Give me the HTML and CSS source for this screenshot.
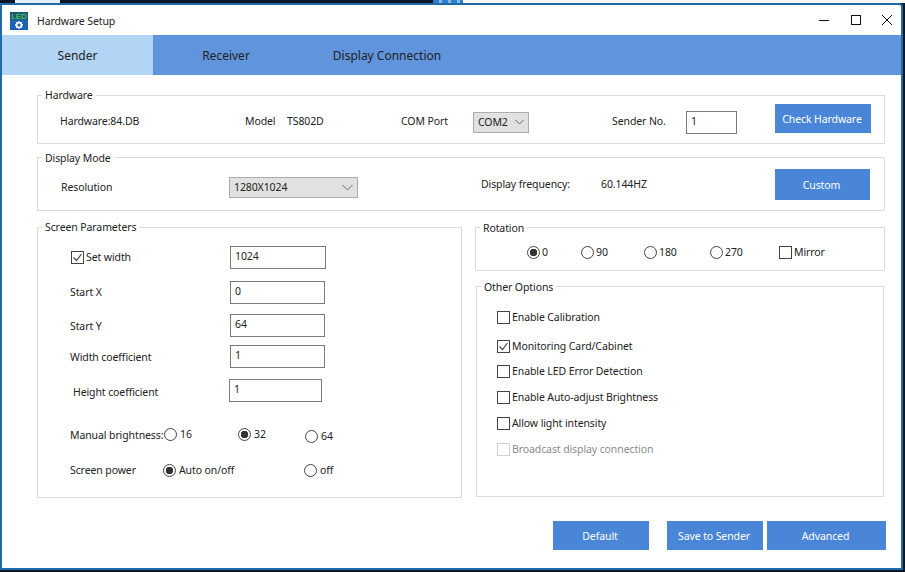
FILE: index.html
```html
<!DOCTYPE html>
<html>
<head>
    <title>Hardware Setup</title>
    <link rel="stylesheet" href="styles.css">
</head>
<body>
    <!-- bits of the desktop behind the window -->
    <div class="desk-left"></div>
    <div class="desk-mid"></div>
    <div class="desk-right"></div>

    <div class="window">
        <div class="titlebar">
            <svg class="app-icon" width="18" height="18" viewBox="0 0 18 18">
                <rect width="18" height="18" fill="#1b62b4"/>
                <rect width="18" height="8" fill="#1d5a7a"/>
                <text x="9" y="7" font-size="8" text-anchor="middle" fill="#5fdc4a" font-family="Liberation Sans, sans-serif">LED</text>
                <circle cx="9" cy="13" r="2.4" fill="none" stroke="#eef2f7" stroke-width="1.8"/>
                <path d="M9 9v1.4M9 15.6V17M5 13h1.4M11.6 13H13M6.2 10.2l1 1M10.8 14.8l1 1M6.2 15.8l1-1M10.8 11.2l1-1" stroke="#eef2f7" stroke-width="1.3"/>
            </svg>
            <span class="title">Hardware Setup</span>
            <div class="win-btns">
                <svg width="13" height="12" viewBox="0 0 13 12"><path d="M1 6.5h10" stroke="#111" stroke-width="1"/></svg>
                <svg width="12" height="12" viewBox="0 0 12 12"><rect x="1.5" y="1.5" width="9" height="9" fill="none" stroke="#111"/></svg>
                <svg width="12" height="12" viewBox="0 0 12 12"><path d="M1 1l10 10M11 1L1 11" stroke="#111" stroke-width="1"/></svg>
            </div>
        </div>

        <div class="tabs">
            <div class="tab tab-active">Sender</div>
            <div class="tab tab-receiver">Receiver</div>
            <div class="tab tab-display">Display Connection</div>
        </div>

        <div class="content">
            <fieldset class="group group-hardware">
                <legend>Hardware</legend>
                <span class="hw-name">Hardware:84.DB</span>
                <span class="hw-model">Model</span>
                <span class="hw-type">TS802D</span>
                <span class="hw-port">COM Port</span>
                <div class="select select-com">COM2<svg width="9" height="6" viewBox="0 0 9 6"><path d="M.5 1l4 4 4-4" fill="none" stroke="#666"/></svg></div>
                <span class="hw-no">Sender No.</span>
                <div class="textbox textbox-no">1</div>
                <button class="btn btn-check">Check Hardware</button>
            </fieldset>

            <fieldset class="group group-mode">
                <legend>Display Mode</legend>
                <span class="mode-label">Resolution</span>
                <div class="select select-res">1280X1024<svg width="11" height="7" viewBox="0 0 11 7"><path d="M.5 1l5 5 5-5" fill="none" stroke="#666"/></svg></div>
                <span class="mode-freq">Display frequency:</span>
                <span class="mode-val">60.144HZ</span>
                <button class="btn btn-custom">Custom</button>
            </fieldset>

            <div class="columns">
                <fieldset class="group group-screen">
                    <legend>Screen Parameters</legend>
                    <div class="screen-body">
                        <div class="row row-width">
                            <label class="check-label"><span class="box"><svg width="13" height="13" viewBox="0 0 13 13"><path d="M2.5 6.5l3 3 5-6.5" fill="none" stroke="#444" stroke-width="1.2"/></svg></span>Set width</label>
                            <div class="textbox tb-w96">1024</div>
                        </div>
                        <div class="row row-x">
                            <span class="field-label">Start X</span>
                            <div class="textbox tb-w95">0</div>
                        </div>
                        <div class="row row-y">
                            <span class="field-label">Start Y</span>
                            <div class="textbox tb-w95">64</div>
                        </div>
                        <div class="row row-wc">
                            <span class="field-label">Width coefficient</span>
                            <div class="textbox tb-w95">1</div>
                        </div>
                        <div class="row row-hc">
                            <span class="field-label label-hc">Height coefficient</span>
                            <div class="textbox tb-w93">1</div>
                        </div>
                        <div class="row row-bright">
                            <span class="bright-label">Manual brightness:</span>
                            <label class="opt opt-16"><span class="radio"></span>16</label>
                            <label class="opt opt-32"><span class="radio on"></span>32</label>
                            <label class="opt opt-64"><span class="radio"></span>64</label>
                        </div>
                        <div class="row row-power">
                            <span class="power-label">Screen power</span>
                            <label class="opt opt-auto"><span class="radio on"></span>Auto on/off</label>
                            <label class="opt opt-off"><span class="radio"></span>off</label>
                        </div>
                    </div>
                </fieldset>

                <div class="right-col">
                    <fieldset class="group group-rotation">
                        <legend>Rotation</legend>
                        <div class="rotation-body">
                            <label class="opt rot-0"><span class="radio on"></span>0</label>
                            <label class="opt rot-90"><span class="radio"></span>90</label>
                            <label class="opt rot-180"><span class="radio"></span>180</label>
                            <label class="opt rot-270"><span class="radio"></span>270</label>
                            <label class="check-label"><span class="box"></span>Mirror</label>
                        </div>
                    </fieldset>

                    <fieldset class="group group-other">
                        <legend>Other Options</legend>
                        <div class="other-body">
                            <label class="check-label"><span class="box"></span>Enable Calibration</label>
                            <label class="check-label other-mon"><span class="box"><svg width="13" height="13" viewBox="0 0 13 13"><path d="M2.5 6.5l3 3 5-6.5" fill="none" stroke="#444" stroke-width="1.2"/></svg></span>Monitoring Card/Cabinet</label>
                            <label class="check-label other-led"><span class="box"></span>Enable LED Error Detection</label>
                            <label class="check-label other-next"><span class="box"></span>Enable Auto-adjust Brightness</label>
                            <label class="check-label other-next"><span class="box"></span>Allow light intensity</label>
                            <label class="check-label other-next disabled"><span class="box"></span>Broadcast display connection</label>
                        </div>
                    </fieldset>
                </div>
            </div>

            <div class="footer">
                <button class="btn btn-default">Default</button>
                <button class="btn btn-save">Save to Sender</button>
                <button class="btn btn-advanced">Advanced</button>
            </div>
        </div>
    </div>
</body>
</html>
```

FILE: styles.css
```css
* {
    box-sizing: border-box;
}

html, body {
    height: 100%;
}

body {
    margin: 0;
    position: relative;
    overflow: hidden;
    background-color: #0b1626;
    font-family: "Noto Sans", Arial, sans-serif;
    font-size: 10.5px;
    line-height: 15px;
    letter-spacing: -0.1px;
    color: #222;
}

.desk-left {
    position: absolute;
    left: 15px;
    top: 0;
    width: 45px;
    height: 3px;
    background-color: #e6eef8;
}

.desk-mid {
    position: absolute;
    left: 433px;
    top: 0;
    width: 30px;
    height: 3px;
    background: repeating-linear-gradient(90deg, #2f7fd0 0 6px, #8db8e6 6px 9px);
}

.desk-right {
    position: absolute;
    left: 463px;
    top: 0;
    width: 442px;
    height: 3px;
    background-color: #f7f7f7;
}

.window {
    position: absolute;
    left: 0;
    top: 3px;
    width: 903px;
    height: 567px;
    background-color: #fff;
    border: 2px solid #1f6aa8;
    border-top-right-radius: 4px;
    display: flex;
    flex-direction: column;
}

.titlebar {
    height: 30px;
    display: flex;
    align-items: center;
    padding: 2px 8px 0;
}

.app-icon {
    margin-right: 9px;
}

.win-btns {
    margin: -2px 0 0 auto;
    display: flex;
    gap: 19px;
    align-items: center;
}

.tabs {
    height: 40px;
    display: flex;
    background-color: #6094dc;
    font-size: 12px;
    letter-spacing: 0;
}

.tab {
    display: flex;
    align-items: center;
    justify-content: center;
    height: 100%;
}

.tab-active {
    width: 151px;
    background-color: #b3d5f5;
}

.tab-receiver {
    width: 146px;
}

.tab-display {
    width: 176px;
}

.content {
    padding: 13px 0 0 35px;
}

.group {
    margin: 0;
    border: 1px solid #dcdcdc;
    padding: 0;
    min-width: 0;
}

.group legend {
    margin-left: 4px;
    padding: 0 3px;
    line-height: 14px;
}

.group-hardware {
    width: 848px;
    height: 56px;
    display: flex;
    align-items: center;
}

.group-hardware > span,
.group-mode > span {
    white-space: nowrap;
}

.hw-name {
    margin: 0 0 2px 22px;
    width: 185px;
}

.hw-model {
    margin-bottom: 2px;
    width: 42px;
}

.hw-type {
    margin-bottom: 2px;
    width: 114px;
}

.hw-port {
    margin-bottom: 2px;
    width: 72px;
}

.hw-no {
    margin: 0 0 2px 83px;
    width: 74px;
}

.select {
    display: flex;
    align-items: center;
    justify-content: space-between;
    background-color: #e1e1e1;
    border: 1px solid #adadad;
    padding: 0 4px;
}

.select-com {
    width: 56px;
    height: 21px;
    margin-bottom: 1px;
}

.select-res {
    margin: 0 0 0 113px;
    width: 129px;
    height: 21px;
}

.textbox {
    height: 23px;
    border: 1px solid #7a7a7a;
    background-color: #fff;
    padding: 0 4px;
    line-height: 18px;
}

.textbox-no {
    width: 51px;
}

.tb-w96 {
    width: 96px;
}

.tb-w95 {
    width: 95px;
}

.tb-w93 {
    width: 93px;
    margin-left: -1px;
}

.btn {
    border: none;
    background-color: #4a86d8;
    color: #fff;
    font-family: inherit;
    font-size: 10.5px;
    letter-spacing: -0.1px;
    padding: 0 2px 0 0;
}

.btn-check {
    margin: 0 0 8px 38px;
    width: 96px;
    height: 29px;
}

.group-mode {
    margin-top: 6px;
    width: 848px;
    height: 61px;
    display: flex;
    align-items: center;
}

.group-mode legend,
.group-rotation legend {
    position: relative;
    top: 1px;
}

.mode-label {
    margin-left: 23px;
    width: 55px;
}

.mode-freq {
    margin: 0 0 6px 123px;
    width: 120px;
}

.mode-val {
    margin-bottom: 6px;
    width: 174px;
}

.btn-custom {
    margin-bottom: 6px;
    width: 95px;
    height: 31px;
    padding-top: 2px;
}

.columns {
    margin-top: 9px;
    display: flex;
}

.group-screen {
    width: 425px;
    height: 278px;
}

.screen-body {
    padding-left: 32px;
}

.row {
    display: flex;
    align-items: center;
    height: 23px;
}

.field-label {
    width: 160px;
}

.row-width {
    margin-top: 12px;
}

.row-width .check-label {
    padding-left: 1px;
    width: 160px;
}

.row-x {
    margin-top: 12px;
}

.row-y {
    margin-top: 10px;
}

.row-y .field-label,
.row-wc .field-label {
    padding-top: 2px;
}

.row-wc {
    margin-top: 8px;
}

.row-hc {
    margin-top: 11px;
}

.label-hc {
    padding: 4px 0 0 3px;
}

.row-bright {
    margin-top: 21px;
    align-items: flex-start;
    padding-top: 4px;
}

.row-power {
    margin-top: 12px;
    padding-top: 2px;
}

.bright-label {
    margin-top: 1px;
    width: 94px;
    white-space: nowrap;
}

.power-label {
    width: 93px;
}

.opt {
    display: flex;
    align-items: center;
    gap: 3px;
    white-space: nowrap;
}

.opt-16 {
    width: 74px;
}

.opt-32 {
    width: 67px;
}

.opt-64 {
    margin-top: 2px;
}

.opt-auto {
    width: 141px;
}

.radio {
    display: inline-block;
    width: 13px;
    height: 13px;
    border: 1px solid #444;
    border-radius: 50%;
    background-color: #fff;
    flex-shrink: 0;
}

.radio.on {
    background: radial-gradient(circle, #333 0 3.5px, #fff 4px);
}

.check-label {
    display: flex;
    align-items: center;
    gap: 2px;
    white-space: nowrap;
}

.box {
    display: inline-block;
    width: 13px;
    height: 13px;
    border: 1px solid #444;
    background-color: #fff;
    flex-shrink: 0;
    position: relative;
}

.box svg {
    position: absolute;
    left: -1px;
    top: -1px;
}

.right-col {
    margin-left: 13px;
}

.group-rotation {
    width: 410px;
    height: 51px;
}

.rotation-body {
    display: flex;
    align-items: center;
    height: 34px;
    padding: 2px 0 0 51px;
}

.rotation-body .opt {
    gap: 2px;
}

.rot-0 {
    width: 54px;
}

.rot-90 {
    width: 63px;
}

.rot-180 {
    width: 66px;
}

.rot-270 {
    width: 69px;
}

.group-other {
    margin: 8px 0 0 1px;
    width: 408px;
    height: 218px;
}

.group-other legend {
    position: relative;
    top: 1px;
}

.other-body {
    padding: 17px 0 0 20px;
}

.other-mon {
    margin-top: 14px;
}

.other-led {
    margin-top: 10px;
}

.other-next {
    margin-top: 11px;
}

.check-label.disabled {
    color: #8c8c8c;
}

.disabled .box {
    border-color: #cfcfcf;
}

.footer {
    margin-top: 23px;
    display: flex;
    padding-left: 516px;
}

.btn-default,
.btn-save {
    width: 96px;
    height: 29px;
}

.btn-save {
    margin-left: 18px;
}

.btn-advanced {
    margin-left: 4px;
    width: 119px;
    height: 29px;
}
```
